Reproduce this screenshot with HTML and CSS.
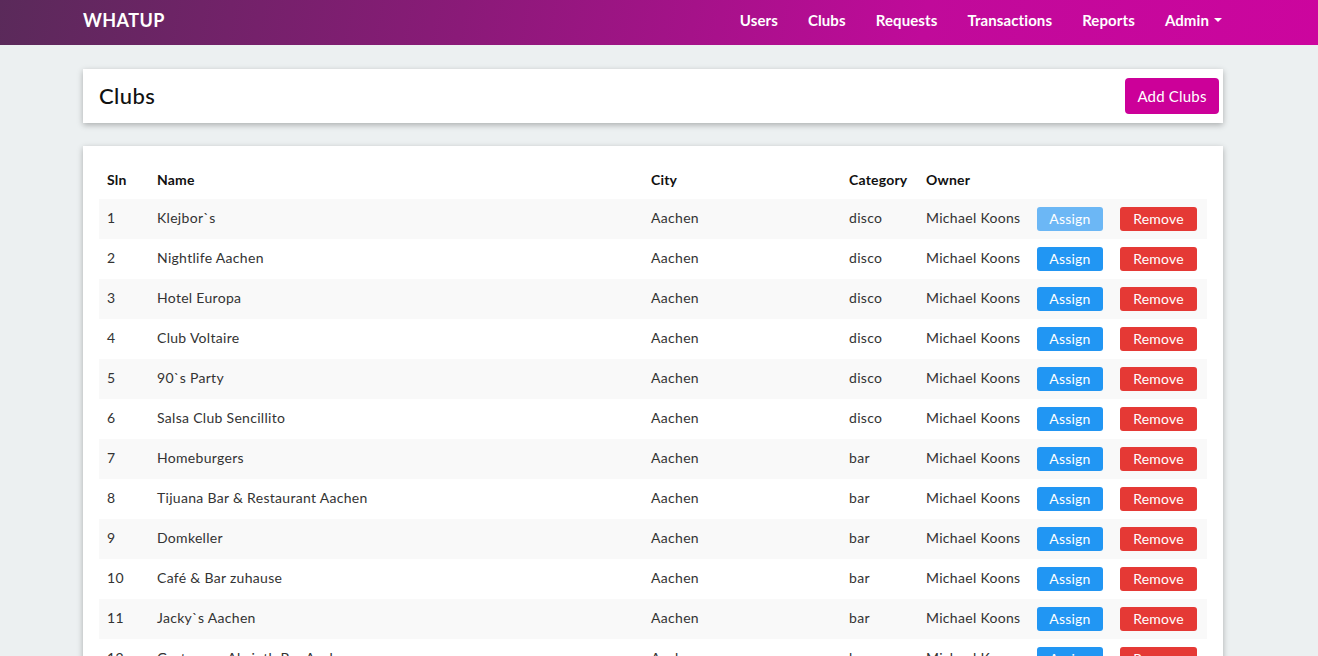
FILE: index.html
```html
<!DOCTYPE html>
<html>
<head>
<meta charset="utf-8">
<link rel="stylesheet" href="styles.css">
</head>
<body>
<nav class="navbar">
  <div class="container nav-inner">
    <a class="brand">WHATUP</a>
    <ul class="nav-links">
      <li>Users</li>
      <li>Clubs</li>
      <li>Requests</li>
      <li>Transactions</li>
      <li>Reports</li>
      <li>Admin <span class="caret"></span></li>
    </ul>
  </div>
</nav>
<main class="container">
  <section class="card head-card">
    <h1 class="title">Clubs</h1>
    <button class="btn btn-add">Add Clubs</button>
  </section>
  <section class="card table-card">
    <table class="table">
      <colgroup>
        <col class="c-sln"><col class="c-name"><col class="c-city"><col class="c-cat"><col class="c-owner"><col class="c-assign"><col class="c-remove">
      </colgroup>
      <thead>
        <tr><th>Sln</th><th>Name</th><th>City</th><th>Category</th><th>Owner</th><th></th><th></th></tr>
      </thead>
      <tbody>
        <tr><td>1</td><td>Klejbor`s</td><td>Aachen</td><td>disco</td><td>Michael Koons</td><td><button class="btn btn-assign light">Assign</button></td><td><button class="btn btn-remove">Remove</button></td></tr>
        <tr><td>2</td><td>Nightlife Aachen</td><td>Aachen</td><td>disco</td><td>Michael Koons</td><td><button class="btn btn-assign">Assign</button></td><td><button class="btn btn-remove">Remove</button></td></tr>
        <tr><td>3</td><td>Hotel Europa</td><td>Aachen</td><td>disco</td><td>Michael Koons</td><td><button class="btn btn-assign">Assign</button></td><td><button class="btn btn-remove">Remove</button></td></tr>
        <tr><td>4</td><td>Club Voltaire</td><td>Aachen</td><td>disco</td><td>Michael Koons</td><td><button class="btn btn-assign">Assign</button></td><td><button class="btn btn-remove">Remove</button></td></tr>
        <tr><td>5</td><td>90`s Party</td><td>Aachen</td><td>disco</td><td>Michael Koons</td><td><button class="btn btn-assign">Assign</button></td><td><button class="btn btn-remove">Remove</button></td></tr>
        <tr><td>6</td><td>Salsa Club Sencillito</td><td>Aachen</td><td>disco</td><td>Michael Koons</td><td><button class="btn btn-assign">Assign</button></td><td><button class="btn btn-remove">Remove</button></td></tr>
        <tr><td>7</td><td>Homeburgers</td><td>Aachen</td><td>bar</td><td>Michael Koons</td><td><button class="btn btn-assign">Assign</button></td><td><button class="btn btn-remove">Remove</button></td></tr>
        <tr><td>8</td><td>Tijuana Bar &amp; Restaurant Aachen</td><td>Aachen</td><td>bar</td><td>Michael Koons</td><td><button class="btn btn-assign">Assign</button></td><td><button class="btn btn-remove">Remove</button></td></tr>
        <tr><td>9</td><td>Domkeller</td><td>Aachen</td><td>bar</td><td>Michael Koons</td><td><button class="btn btn-assign">Assign</button></td><td><button class="btn btn-remove">Remove</button></td></tr>
        <tr><td>10</td><td>Café &amp; Bar zuhause</td><td>Aachen</td><td>bar</td><td>Michael Koons</td><td><button class="btn btn-assign">Assign</button></td><td><button class="btn btn-remove">Remove</button></td></tr>
        <tr><td>11</td><td>Jacky`s Aachen</td><td>Aachen</td><td>bar</td><td>Michael Koons</td><td><button class="btn btn-assign">Assign</button></td><td><button class="btn btn-remove">Remove</button></td></tr>
        <tr><td>12</td><td>Grotesque Absinth Bar Aachen</td><td>Aachen</td><td>bar</td><td>Michael Koons</td><td><button class="btn btn-assign">Assign</button></td><td><button class="btn btn-remove">Remove</button></td></tr>
      </tbody>
    </table>
  </section>
</main>
</body>
</html>
```
FILE: styles.css
```css
html::-webkit-scrollbar { width: 0; height: 0; }
html { scrollbar-width: none; }
* { box-sizing: border-box; }
body {
  margin: 0;
  background: #ecf0f1;
  font-family: "Lato", "Open Sans", sans-serif;
  font-size: 14px;
  color: #333;
}
.container {
  width: 1140px;
  margin-left: calc((100% - 1152px) / 2);
}
.navbar {
  height: 45px;
  background: linear-gradient(100deg, #5a2a5a 0%, #8a1a78 35%, #c00a9a 70%, #cc059e 100%);
  color: #fff;
}
.nav-inner {
  display: flex;
  align-items: center;
  justify-content: space-between;
  height: 45px;
}
.brand {
  font-size: 18px;
  font-weight: 700;
  letter-spacing: 0.4px;
  margin-top: -6px;
}
.nav-links {
  display: flex;
  list-style: none;
  margin: -6px 1px 0 0;
  padding: 0;
  gap: 30px;
  font-size: 15px;
  font-weight: 700;
  letter-spacing: 0.1px;
}
.nav-links li { display: flex; align-items: center; }
.caret {
  display: inline-block;
  width: 0; height: 0;
  margin-left: 5px;
  border-left: 4px solid transparent;
  border-right: 4px solid transparent;
  border-top: 4px solid #fff;
}
.card {
  background: #fff;
  box-shadow: 0 2px 6px rgba(0,0,0,0.28);
}
.head-card {
  margin-top: 24px;
  height: 54px;
  display: flex;
  align-items: center;
  justify-content: space-between;
  padding: 0 4px 0 16px;
}
.title {
  margin: -2px 0 0;
  font-size: 22px;
  font-weight: 500;
  letter-spacing: 0.4px;
  color: #111;
}
.btn {
  border: none;
  color: #fff;
  font-family: inherit;
  border-radius: 3px;
  cursor: pointer;
  letter-spacing: 0.2px;
}
.btn-add {
  background: #cc0099;
  height: 36px;
  width: 94px;
  font-size: 15px;
  border-radius: 4px;
}
.table-card {
  margin-top: 23px;
  padding: 16px 16px 16px;
}
.table {
  width: 100%;
  border-collapse: collapse;
  table-layout: fixed;
}
.c-sln { width: 50px; }
.c-name { width: 494px; }
.c-city { width: 198px; }
.c-cat { width: 77px; }
.c-owner { width: 111px; }
.c-assign { width: 83px; }
.c-remove { width: 95px; }
.table th {
  text-align: left;
  font-weight: 700;
  color: #111;
  padding: 6px 8px 8px;
  height: 37px;
  white-space: nowrap;
  letter-spacing: 0.2px;
}
.table td {
  height: 40px;
  padding: 0 8px 3px;
  white-space: nowrap;
  vertical-align: middle;
  letter-spacing: 0.3px;
}
.table tbody tr:nth-child(odd) { background: #f9f9f9; }
.btn-assign {
  background: #2196f3;
  width: 66px;
  height: 24px;
  font-size: 14px;
  margin-top: 2px;
}
.btn-assign.light { background: #6cb7f5; }
.btn-remove {
  background: #e53935;
  width: 77px;
  height: 24px;
  font-size: 14px;
  margin-top: 2px;
}
```
